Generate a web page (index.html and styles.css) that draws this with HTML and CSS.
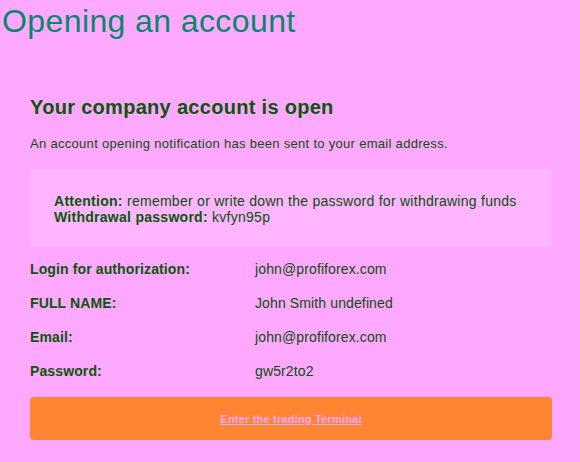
FILE: index.html
```html
<!DOCTYPE html>
<html lang="en">
<head>
<meta charset="utf-8">
<title>Opening an account</title>
<link rel="stylesheet" href="styles.css">
</head>
<body>
<h1 class="page-title">Opening an account</h1>
<main class="card">
  <h2 class="card-title">Your company account is open</h2>
  <p class="card-sub">An account opening notification has been sent to your email address.</p>
  <div class="notice">
    <div class="notice-line"><b>Attention:</b> remember or write down the password for withdrawing funds</div>
    <div class="notice-line"><b>Withdrawal password:</b> kvfyn95p</div>
  </div>
  <div class="rows">
    <div class="row"><span class="label">Login for authorization:</span><span class="value">john@profiforex.com</span></div>
    <div class="row"><span class="label">FULL NAME:</span><span class="value">John Smith undefined</span></div>
    <div class="row"><span class="label">Email:</span><span class="value">john@profiforex.com</span></div>
    <div class="row"><span class="label">Password:</span><span class="value">gw5r2to2</span></div>
  </div>
  <div class="btn"><a href="#" class="btn-link">Enter the trading Terminal</a></div>
</main>
</body>
</html>
```
FILE: styles.css
```css
html, body {
  margin: 0;
  padding: 0;
  background: #ffa8ff;
  font-family: "Liberation Sans", Arial, sans-serif;
  color: #0b4f0b;
}
.page-title {
  margin: 0;
  padding: 1px 0 0 2px;
  font-size: 32px;
  line-height: 40px;
  font-weight: normal;
  letter-spacing: 0.4px;
  color: #05886a;
}
.card {
  margin: 54px 0 0 30px;
  width: 522px;
  display: flex;
  flex-direction: column;
}
.card-title {
  margin: 0;
  font-size: 20px;
  line-height: 24px;
  font-weight: bold;
  letter-spacing: 0.3px;
  color: #0a560a;
}
.card-sub {
  margin: 17px 0 0 0;
  font-size: 13px;
  line-height: 16px;
  letter-spacing: 0.3px;
}
.notice {
  margin-top: 17px;
  background: #ffb5ff;
  padding: 24px 24px 22px 24px;
  font-size: 14px;
  line-height: 16px;
  letter-spacing: 0.27px;
}
.notice b { color: #0a560a; }
.rows {
  margin-top: 14px;
  display: flex;
  flex-direction: column;
  gap: 18px;
  font-size: 14px;
  line-height: 16px;
  letter-spacing: 0.12px;
}
.row {
  display: flex;
}
.label {
  width: 225px;
  font-weight: bold;
  color: #0a560a;
}
.btn {
  margin-top: 18px;
  height: 43px;
  background: #ff8533;
  border-radius: 4px;
  display: flex;
  align-items: center;
  justify-content: center;
}
.btn-link {
  color: #ffa8ff;
  font-size: 11px;
  font-weight: bold;
  letter-spacing: 0.2px;
  text-decoration: underline;
}
```
